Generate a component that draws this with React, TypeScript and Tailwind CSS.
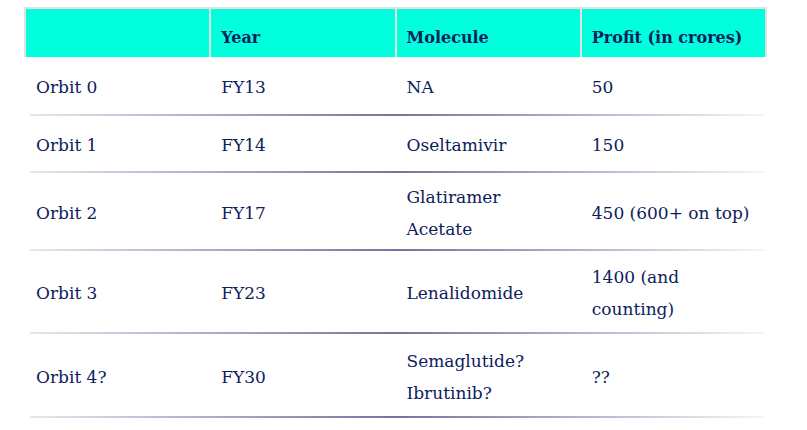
import React from 'react';

type Row = {
  orbit: string;
  year: string;
  molecule: string[];
  profit: string[];
  height: string;
};

const rows: Row[] = [
  { orbit: 'Orbit 0', year: 'FY13', molecule: ['NA'], profit: ['50'], height: 'h-[57px]' },
  { orbit: 'Orbit 1', year: 'FY14', molecule: ['Oseltamivir'], profit: ['150'], height: 'h-[55px]' },
  { orbit: 'Orbit 2', year: 'FY17', molecule: ['Glatiramer', 'Acetate'], profit: ['450 (600+ on top)'], height: 'h-[76px]' },
  { orbit: 'Orbit 3', year: 'FY23', molecule: ['Lenalidomide'], profit: ['1400 (and', 'counting)'], height: 'h-[81px]' },
  { orbit: 'Orbit 4?', year: 'FY30', molecule: ['Semaglutide?', 'Ibrutinib?'], profit: ['??'], height: 'h-[82px]' },
];

const Cell: React.FC<{ lines: string[] }> = ({ lines }) => (
  <div className="flex flex-col justify-center px-[10px] pt-[3px]">
    {lines.map((l) => (
      <span key={l} className="leading-[32px] whitespace-nowrap">{l}</span>
    ))}
  </div>
);

export default function App() {
  return (
    <div className="w-[807px] h-[430px] bg-white pt-[7px] pl-[24px] text-[#0c215c] text-[17px] font-['DejaVu_Serif',serif]">
      <div className="w-[743px]">
        <div className="grid grid-cols-4 gap-[2px] bg-[#e2e2e2] border-2 border-b-0 border-[#e2e2e2]">
          {['', 'Year', 'Molecule', 'Profit (in crores)'].map((h, i) => (
            <div key={i} className="bg-[#00ffdd] h-[48px] flex items-center pt-[9px] px-[10px] text-[16px] font-bold whitespace-nowrap">
              {h}
            </div>
          ))}
        </div>

        {rows.map((r) => (
          <div key={r.orbit}>
            <div className={`grid grid-cols-4 gap-[2px] px-[2px] ${r.height}`}>
              <Cell lines={[r.orbit]} />
              <Cell lines={[r.year]} />
              <Cell lines={r.molecule} />
              <Cell lines={r.profit} />
            </div>
            <div className="ml-[6px] w-[735px] h-[2px] bg-gradient-to-r from-[#e6e7ef] via-[#72769e] to-[#f6f6f8]" />
          </div>
        ))}
      </div>
    </div>
  );
}
